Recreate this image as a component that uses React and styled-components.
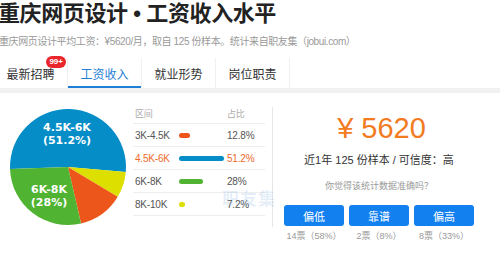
import React from "react";
import styled, { createGlobalStyle } from "styled-components";

const GlobalStyle = createGlobalStyle`
  html, body {
    margin: 0;
    padding: 0;
    background: #fff;
  }
`;

const Page = styled.div`
  position: relative;
  width: 500px;
  height: 255px;
  overflow: hidden;
  background: #fff;
  font-family: "Liberation Sans", "Noto Sans CJK SC", sans-serif;
  color: #333;
`;

const Title = styled.h1`
  margin: 0 0 0 -2px;
  font-size: 22px;
  line-height: 28px;
  font-weight: bold;
  color: #222;
  letter-spacing: -0.4px;
  white-space: nowrap;
`;

const Subtitle = styled.p`
  margin: 7px 0 0 -1px;
  font-size: 10px;
  line-height: 14px;
  color: #999;
  letter-spacing: -0.4px;
  white-space: nowrap;
`;

const TabBar = styled.div`
  display: flex;
  margin-top: 9px;
  border-bottom: 5px solid #f1f1f1;
`;

const TabList = styled.div`
  display: flex;
  margin-left: -6px;
`;

const Tab = styled.div`
  position: relative;
  width: 74px;
  height: 30px;
  box-sizing: border-box;
  display: flex;
  align-items: center;
  justify-content: center;
  padding-top: 1px;
  font-size: 12px;
  color: ${({ $active }) => ($active ? "#1f7fd6" : "#333")};
  border-right: 1px solid #f0f0f0;
  box-shadow: ${({ $active }) => ($active ? "inset 0 -2px 0 #1f7fd6" : "none")};
`;

const Badge = styled.span`
  position: absolute;
  top: -2px;
  right: 1px;
  height: 12px;
  padding: 0 3px;
  border-radius: 6px;
  background: #e8262c;
  color: #fff;
  font-size: 8px;
  line-height: 12px;
  font-weight: bold;
`;

const Content = styled.div`
  display: flex;
  align-items: flex-start;
`;

const PieBox = styled.div`
  width: 133px;
  flex: none;
`;

const Table = styled.div`
  width: 132px;
  margin-top: 10px;
  flex: none;
`;

const Row = styled.div`
  display: grid;
  grid-template-columns: 44px 48px 1fr;
  align-items: center;
  height: ${({ $head }) => ($head ? "20px" : "22px")};
  border-bottom: 1px solid #eee;
  padding-left: 2px;
  font-size: ${({ $head }) => ($head ? "9px" : "10px")};
  letter-spacing: -0.2px;
  color: ${({ $head, $hot }) => ($head ? "#aaa" : $hot ? "#ed6a2c" : "#555")};
`;

const Bar = styled.span`
  display: block;
  height: 5px;
  border-radius: 3px;
  background: ${({ $color }) => $color};
`;

const Watermark = styled.div`
  position: absolute;
  left: 222px;
  top: 185px;
  font-size: 17px;
  font-weight: bold;
  color: rgba(40, 120, 210, 0.12);
  letter-spacing: 1px;
`;

const Panel = styled.div`
  width: 213px;
  height: 120px;
  margin: 14px 0 0 7px;
  border-left: 1px solid #e6e6e6;
  display: flex;
  flex-direction: column;
  align-items: center;
  padding-top: 5px;
  box-sizing: border-box;
`;

const Price = styled.div`
  font-size: 29px;
  line-height: 32px;
  color: #f27a1f;
  margin-left: 5px;
`;

const Meta = styled.div`
  margin-top: 8px;
  font-size: 11px;
  line-height: 16px;
  color: #333;
`;

const Question = styled.div`
  margin-top: 11px;
  font-size: 9px;
  line-height: 14px;
  color: #999;
`;

const Votes = styled.div`
  display: flex;
  gap: 5px;
  margin-top: 12px;
`;

const Vote = styled.div`
  width: 60px;
  display: flex;
  flex-direction: column;
  align-items: center;
`;

const VoteButton = styled.button`
  width: 60px;
  height: 21px;
  border: none;
  border-radius: 3px;
  background: #1380f0;
  color: #fff;
  font-family: inherit;
  font-size: 11px;
  padding: 0;
`;

const VoteCount = styled.span`
  margin-top: 3px;
  font-size: 9px;
  line-height: 14px;
  color: #999;
  white-space: nowrap;
`;

const slices = [
  { label: "3K-4.5K", pct: 12.8, color: "#ED561B" },
  { label: "4.5K-6K", pct: 51.2, color: "#058DC7", hot: true },
  { label: "6K-8K", pct: 28, color: "#50B432" },
  { label: "8K-10K", pct: 7.2, color: "#DDDF00" },
];

const pieSpans = [
  { color: "#058DC7", from: 178, to: 365 },
  { color: "#DDDF00", from: 5, to: 31 },
  { color: "#ED561B", from: 31, to: 77 },
  { color: "#50B432", from: 77, to: 178 },
];

const pt = (cx, cy, r, a) => {
  const rad = (a * Math.PI) / 180;
  return [cx + r * Math.cos(rad), cy + r * Math.sin(rad)];
};

const arc = (cx, cy, r, a0, a1) => {
  const [x0, y0] = pt(cx, cy, r, a0);
  const [x1, y1] = pt(cx, cy, r, a1);
  const large = a1 - a0 > 180 ? 1 : 0;
  return `M${cx},${cy} L${x0},${y0} A${r},${r} 0 ${large} 1 ${x1},${y1} Z`;
};

const Pie = () => (
  <svg width="133" height="150" viewBox="0 0 133 150">
    {pieSpans.map((s) => (
      <path key={s.color} d={arc(68, 74, 58, s.from, s.to)} fill={s.color} />
    ))}
    <g
      fill="#fff"
      fontFamily="DejaVu Sans, sans-serif"
      fontWeight="bold"
      fontSize="11"
      textAnchor="middle"
    >
      <text x="67" y="38">4.5K-6K</text>
      <text x="67" y="51">(51.2%)</text>
      <text x="49" y="100">6K-8K</text>
      <text x="49" y="113">(28%)</text>
    </g>
  </svg>
);

export default function App() {
  return (
    <Page>
      <GlobalStyle />
      <Title>重庆网页设计 • 工资收入水平</Title>
      <Subtitle>重庆网页设计平均工资：¥5620/月，取自 125 份样本。统计来自职友集（jobui.com）</Subtitle>
      <TabBar>
        <TabList>
          <Tab>
            最新招聘
            <Badge>99+</Badge>
          </Tab>
          <Tab $active>工资收入</Tab>
          <Tab>就业形势</Tab>
          <Tab>岗位职责</Tab>
        </TabList>
      </TabBar>
      <Content>
        <PieBox>
          <Pie />
        </PieBox>
        <Table>
          <Row $head>
            <span>区间</span>
            <span />
            <span>占比</span>
          </Row>
          {slices.map((s) => (
            <Row key={s.label} $hot={s.hot}>
              <span>{s.label}</span>
              <span>
                <Bar
                  $color={s.color}
                  style={{ width: Math.max(5, s.pct * 0.87) }}
                />
              </span>
              <span>{s.pct}%</span>
            </Row>
          ))}
        </Table>
        <Panel>
          <Price>¥ 5620</Price>
          <Meta>近1年 125 份样本 / 可信度：高</Meta>
          <Question>你觉得该统计数据准确吗？</Question>
          <Votes>
            <Vote>
              <VoteButton>偏低</VoteButton>
              <VoteCount>14票（58%）</VoteCount>
            </Vote>
            <Vote>
              <VoteButton>靠谱</VoteButton>
              <VoteCount>2票（8%）</VoteCount>
            </Vote>
            <Vote>
              <VoteButton>偏高</VoteButton>
              <VoteCount>8票（33%）</VoteCount>
            </Vote>
          </Votes>
        </Panel>
      </Content>
      <Watermark>职友集</Watermark>
    </Page>
  );
}
